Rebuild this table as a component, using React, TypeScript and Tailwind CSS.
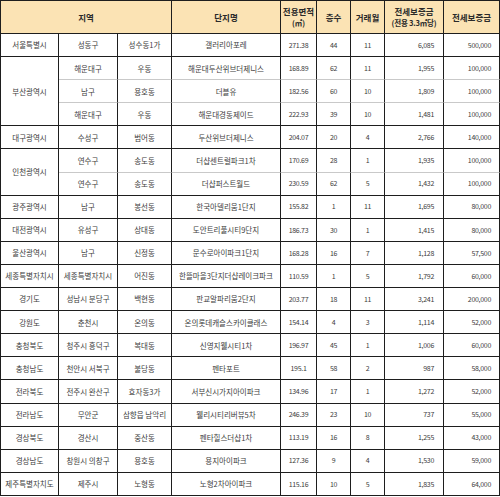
import React from "react";

type Row = {
  region?: string;
  span?: number;
  gu: string;
  dong: string;
  name: string;
  area: string;
  fl: string;
  m: string;
  p33: string;
  dep: string;
  last: boolean;
};

const raw: [string | null, number, string, string, string, string, string, string, string, string][] = [
  ["서울특별시", 1, "성동구", "성수동1가", "갤러리아포레", "271.38", "44", "11", "6,085", "500,000"],
  ["부산광역시", 3, "해운대구", "우동", "해운대두산위브더제니스", "168.89", "62", "11", "1,955", "100,000"],
  [null, 0, "남구", "용호동", "더블유", "182.56", "60", "10", "1,809", "100,000"],
  [null, 0, "해운대구", "우동", "해운대경동제이드", "222.93", "39", "10", "1,481", "100,000"],
  ["대구광역시", 1, "수성구", "범어동", "두산위브더제니스", "204.07", "20", "4", "2,766", "140,000"],
  ["인천광역시", 2, "연수구", "송도동", "더샵센트럴파크1차", "170.69", "28", "1", "1,935", "100,000"],
  [null, 0, "연수구", "송도동", "더샵퍼스트월드", "230.59", "62", "5", "1,432", "100,000"],
  ["광주광역시", 1, "남구", "봉선동", "한국아델리움1단지", "155.82", "1", "11", "1,695", "80,000"],
  ["대전광역시", 1, "유성구", "상대동", "도안트리풀시티9단지", "186.73", "30", "1", "1,415", "80,000"],
  ["울산광역시", 1, "남구", "신정동", "문수로아이파크1단지", "168.28", "16", "7", "1,128", "57,500"],
  ["세종특별자치시", 1, "세종특별자치시", "어진동", "한뜰마을3단지더샵레이크파크", "110.59", "1", "5", "1,792", "60,000"],
  ["경기도", 1, "성남시 분당구", "백현동", "판교알파리움2단지", "203.77", "18", "11", "3,241", "200,000"],
  ["강원도", 1, "춘천시", "온의동", "온의롯데캐슬스카이클래스", "154.14", "4", "3", "1,114", "52,000"],
  ["충청북도", 1, "청주시 흥덕구", "복대동", "신영지웰시티1차", "196.97", "45", "1", "1,006", "60,000"],
  ["충청남도", 1, "천안시 서북구", "불당동", "펜타포트", "195.1", "58", "2", "987", "58,000"],
  ["전라북도", 1, "전주시 완산구", "효자동3가", "서부신시가지아이파크", "134.96", "17", "1", "1,272", "52,000"],
  ["전라남도", 1, "무안군", "삼향읍 남악리", "웰리시티리버뷰5차", "246.39", "23", "10", "737", "55,000"],
  ["경상북도", 1, "경산시", "중산동", "펜타힐스더샵1차", "113.19", "16", "8", "1,255", "43,000"],
  ["경상남도", 1, "창원시 의창구", "용호동", "용지아이파크", "127.36", "9", "4", "1,530", "59,000"],
  ["제주특별자치도", 1, "제주시", "노형동", "노형2차아이파크", "115.16", "10", "5", "1,835", "64,000"],
];

const rows: Row[] = (() => {
  const out: Row[] = [];
  let remaining = 0;
  raw.forEach((r) => {
    const [region, span, gu, dong, name, area, fl, m, p33, dep] = r;
    if (region) remaining = span;
    remaining -= 1;
    out.push({
      region: region ?? undefined,
      span,
      gu,
      dong,
      name,
      area,
      fl,
      m,
      p33,
      dep,
      last: remaining === 0,
    });
  });
  return out;
})();

const font = { fontFamily: '"Noto Sans CJK KR", "Noto Sans", sans-serif' };

export default function App() {
  return (
    <div className="w-[500px] h-[497px] bg-white" style={font}>
      <div className="grid grid-cols-[58px_59px_54px_109px_36px_34px_34px_59px_56px] grid-rows-[33px_repeat(20,23.1px)] border-t border-l border-[#1e1e1e] w-[500px]">
        {/* header */}
        <div className="col-span-3 flex items-center justify-center bg-[#fbe3b4] border-r border-b border-[#1e1e1e] text-[8.5px] font-bold text-[#2a2a2a]">
          지역
        </div>
        <div className="flex items-center justify-center bg-[#fbe3b4] border-r border-b border-[#1e1e1e] text-[8.5px] font-bold text-[#2a2a2a]">
          단지명
        </div>
        <div className="flex flex-col items-center justify-center bg-[#fbe3b4] border-r border-b border-[#1e1e1e] text-[8.5px] font-bold text-[#2a2a2a] leading-[12px]">
          <span>전용면적</span>
          <span className="text-[7.5px]">(㎡)</span>
        </div>
        <div className="flex items-center justify-center bg-[#fbe3b4] border-r border-b border-[#1e1e1e] text-[8.5px] font-bold text-[#2a2a2a]">
          층수
        </div>
        <div className="flex items-center justify-center bg-[#fbe3b4] border-r border-b border-[#1e1e1e] text-[8.5px] font-bold text-[#2a2a2a]">
          거래월
        </div>
        <div className="flex flex-col items-center justify-center bg-[#fbe3b4] border-r border-b border-[#1e1e1e] text-[8.5px] font-bold text-[#2a2a2a] leading-[12px]">
          <span>전세보증금</span>
          <span className="text-[7.5px] tracking-[-0.2px]">(전용 3.3㎡당)</span>
        </div>
        <div className="flex items-center justify-center bg-[#fbe3b4] border-r border-b border-[#1e1e1e] text-[8.5px] font-bold text-[#2a2a2a]">
          전세보증금
        </div>

        {rows.map((r, i) => {
          const b = r.last ? "border-b-[#1e1e1e]" : "border-b-[#c9c9c9]";
          const base = `flex items-center border-r border-r-[#1e1e1e] border-b ${b} text-[#3d3d3d] whitespace-nowrap overflow-hidden`;
          const kr = "text-[7.5px] justify-center";
          const num = "text-[7px] tracking-[-0.3px]";
          return (
            <React.Fragment key={i}>
              {r.region && (
                <div
                  className={`flex items-center justify-center border-r border-b border-[#1e1e1e] text-[#3d3d3d] text-[7.5px] whitespace-nowrap ${
                    r.span === 3 ? "row-span-3" : r.span === 2 ? "row-span-2" : ""
                  }`}
                >
                  {r.region}
                </div>
              )}
              <div className={`${base} ${kr}`}>{r.gu}</div>
              <div className={`${base} ${kr}`}>{r.dong}</div>
              <div className={`${base} ${kr}`}>{r.name}</div>
              <div className={`${base} ${num} justify-center`}>{r.area}</div>
              <div className={`${base} ${num} justify-center`}>{r.fl}</div>
              <div className={`${base} ${num} justify-center`}>{r.m}</div>
              <div className={`${base} ${num} justify-end pr-[9px]`}>{r.p33}</div>
              <div className={`${base} ${num} justify-end pr-[8px]`}>{r.dep}</div>
            </React.Fragment>
          );
        })}
      </div>
    </div>
  );
}
